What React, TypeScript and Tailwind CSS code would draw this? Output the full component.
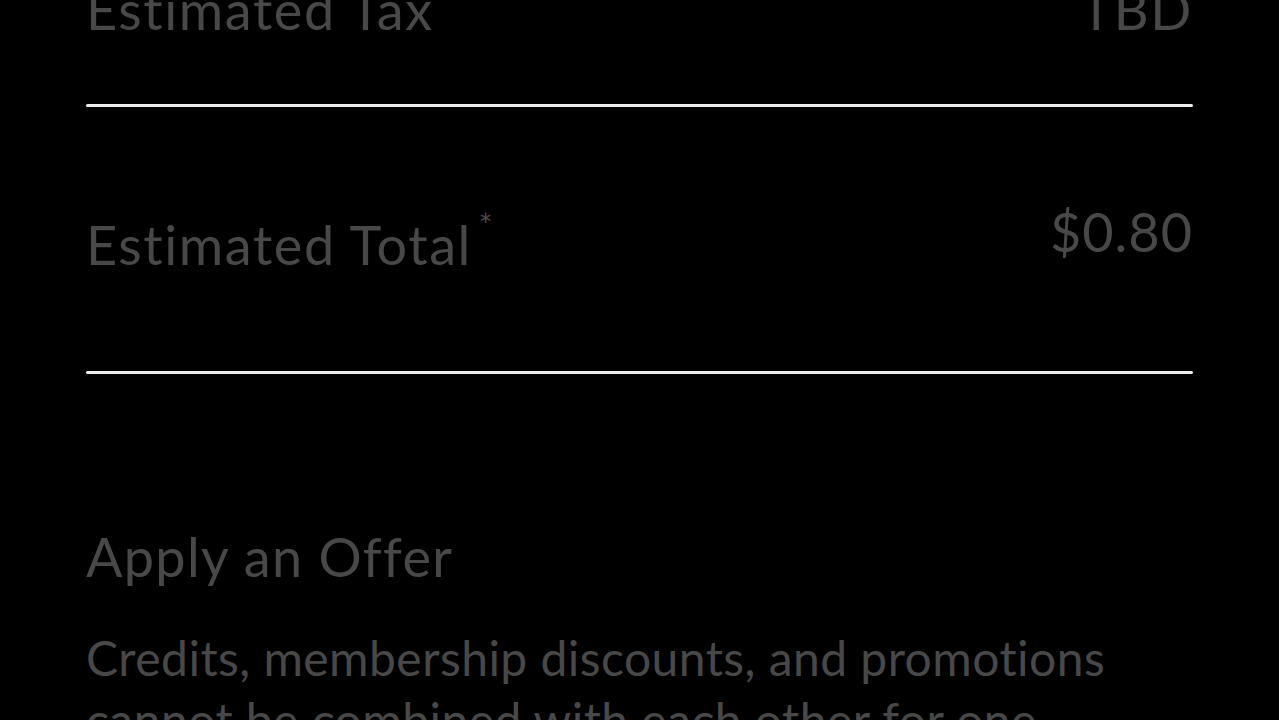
import React from 'react';

export default function App() {
  return (
    <div
      className="h-screen w-full overflow-hidden bg-black text-[#484848]"
      style={{ fontFamily: 'Lato, "Noto Sans", sans-serif' }}
    >
      <div className="-mt-[20px] flex flex-col px-[86px]">
        {/* Tax row */}
        <div className="flex justify-between text-[54px] leading-[60px] tracking-[1.6px]">
          <span>Estimated Tax</span>
          <span>TBD</span>
        </div>
        <div className="mt-[64px] h-[3px] rounded-full bg-[#ededed]" />

        {/* Total row */}
        <div className="mt-[95px] flex items-start justify-between leading-[60px] tracking-[1.6px]">
          <span className="relative mt-[13px] text-[54px]">
            Estimated Total
            <span className="absolute -right-[22px] -top-[6px] text-[32px] leading-none">*</span>
          </span>
          <span className="text-[54px] tracking-[1px]">$0.80</span>
        </div>
        <div className="mt-[96px] h-[3px] rounded-full bg-[#ededed]" />

        {/* Offer section */}
        <h2 className="mt-[153px] text-[54px] leading-[60px] tracking-[1.3px]">Apply an Offer</h2>
        <p className="mt-[40px] max-w-[1080px] text-[48px] leading-[62px] tracking-[0.45px]">
          Credits, membership discounts, and promotions cannot be combined with each other for one order.
        </p>
      </div>
    </div>
  );
}
